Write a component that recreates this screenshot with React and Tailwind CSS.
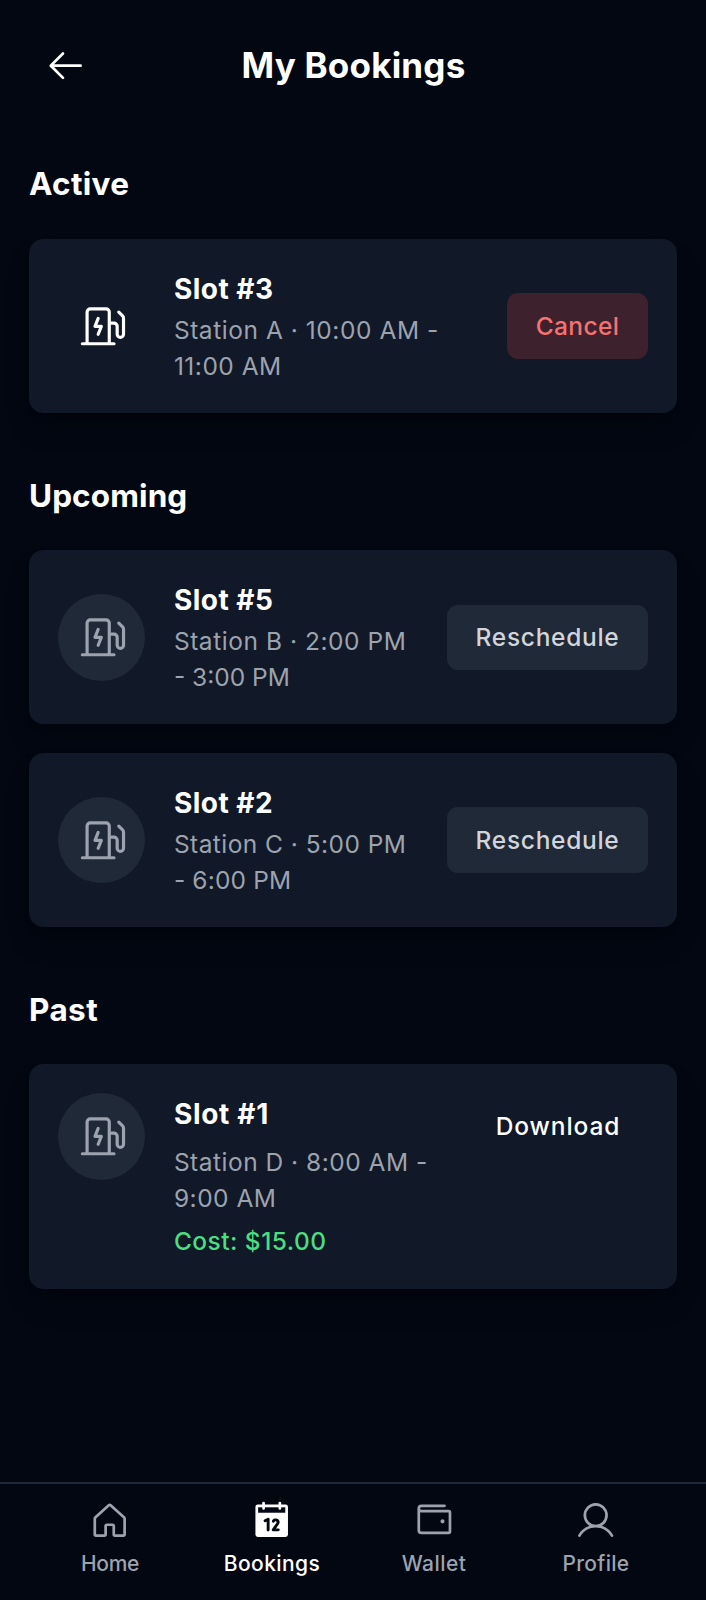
import { PiChargingStation, PiWallet, PiUser, PiArrowLeft } from 'react-icons/pi';

function HouseIcon() {
  return (
    <svg viewBox="0 0 256 256" className="size-[43.4px]" fill="none" stroke="currentColor" strokeWidth="16" strokeLinecap="round" strokeLinejoin="round">
      <path d="M152,208V160a8,8,0,0,0-8-8H112a8,8,0,0,0-8,8v48a8,8,0,0,1-8,8H48a8,8,0,0,1-8-8V115.5a8.3,8.3,0,0,1,2.6-5.9l80-72.7a8,8,0,0,1,10.8,0l80,72.7a8.3,8.3,0,0,1,2.6,5.9V208a8,8,0,0,1-8,8H160A8,8,0,0,1,152,208Z" />
    </svg>
  );
}

function CalendarIcon() {
  return (
    <svg viewBox="0 0 256 256" className="size-[43.4px]" fill="none" strokeLinecap="round" strokeLinejoin="round">
      <rect x="32" y="32" width="192" height="192" rx="14" fill="#ffffff" />
      <rect x="48" y="49" width="160" height="32" fill="#030712" />
      <path d="M80,24V56M176,24V56" stroke="#ffffff" strokeWidth="16" />
      <path d="M89,128l18-9v64M138,131a14,14,0,1,1,26,13L137,182h30" stroke="#030712" strokeWidth="17" />
    </svg>
  );
}

function Section({ title, spacing, children }) {
  return (
    <section>
      <h2 className={`mb-[29px] h-[50.7px] text-[31.5px] leading-[50.7px] font-bold ${spacing}`}>{title}</h2>
      <div className="flex flex-col gap-[29px]">{children}</div>
    </section>
  );
}

function Booking({ slot, slotSpacing, lines, cost, active, action, actionStyle }) {
  return (
    <article
      className={`flex gap-[29px] rounded-[14.5px] bg-[#111827] p-[29px] shadow-[0_18px_27px_-5px_rgba(0,0,0,0.25),0_7px_11px_-7px_rgba(0,0,0,0.25)] ${
        cost ? 'h-[224.2px] items-start' : 'h-[173.8px] items-center'
      }`}
    >
      <div
        className={`flex size-[86.9px] shrink-0 items-center justify-center rounded-full text-[50.7px] ${
          active ? 'text-white' : 'bg-[#1f2937] text-[#9ca3af]'
        }`}
      >
        <PiChargingStation />
      </div>
      <div className="min-w-0 flex-1 whitespace-nowrap">
        <h3 className={`h-[43.4px] text-[28px] leading-[43.4px] font-bold ${slotSpacing}`}>{slot}</h3>
        <p className={`text-[24.5px] leading-[36.2px] text-[#9ca3af] ${cost ? 'mt-[7.2px]' : ''}`}>
          {lines.map(([text, spacing]) => (
            <span key={text} className={`block ${spacing}`}>{text}</span>
          ))}
        </p>
        {cost && (
          <p className="mt-[7.2px] text-[24.5px] leading-[36.2px] font-medium tracking-[0.45px] text-[#4ade80]">{cost}</p>
        )}
      </div>
      <button className={`h-[65.2px] shrink-0 rounded-[10.9px] text-[24.5px] font-medium ${actionStyle}`}>{action}</button>
    </article>
  );
}

function NavItem({ icon, label, style }) {
  return (
    <a className={`flex flex-1 flex-col items-center gap-[6.4px] text-[21px] leading-[29px] font-medium ${style}`}>
      <span className="text-[43.4px]">{icon}</span>
      <span>{label}</span>
    </a>
  );
}

const reschedule = 'w-[201px] bg-[#1f2937] text-[#d1d5db] tracking-[0.7px]';

export default function App() {
  return (
    <div className="flex h-[1600px] w-[706px] flex-col overflow-hidden bg-[#030712] font-['Inter',sans-serif] text-white">
      <header className="flex h-[130.6px] shrink-0 items-center px-[29px]">
        <button className="flex size-[72.4px] items-center justify-center text-[43.4px]" aria-label="Back">
          <PiArrowLeft />
        </button>
        <h1 className="flex-1 pr-[71.4px] text-center text-[35px] font-bold tracking-[0.2px]">My Bookings</h1>
      </header>

      <main className="flex flex-1 flex-col gap-[57.7px] px-[29px] pt-[28.9px]">
        <Section title="Active" spacing="tracking-[0.3px]">
          <Booking
            active
            slot="Slot #3"
            slotSpacing="tracking-[0.5px]"
            lines={[['Station A · 10:00 AM -', 'tracking-[0.55px]'], ['11:00 AM', 'tracking-[0.5px]']]}
            action="Cancel"
            actionStyle="w-[141px] bg-[#ef4444]/20 text-[#f87171] tracking-[0.4px]"
          />
        </Section>
        <Section title="Upcoming" spacing="tracking-[0.1px]">
          <Booking
            slot="Slot #5"
            slotSpacing="tracking-[0.5px]"
            lines={[['Station B · 2:00 PM', 'tracking-[0.55px]'], ['- 3:00 PM', 'tracking-[0px]']]}
            action="Reschedule"
            actionStyle={reschedule}
          />
          <Booking
            slot="Slot #2"
            slotSpacing="tracking-[0.5px]"
            lines={[['Station C · 5:00 PM', 'tracking-[0.45px]'], ['- 6:00 PM', 'tracking-[0.15px]']]}
            action="Reschedule"
            actionStyle={reschedule}
          />
        </Section>
        <Section title="Past" spacing="tracking-[0.4px]">
          <Booking
            slot="Slot #1"
            slotSpacing="tracking-[0.7px]"
            lines={[['Station D · 8:00 AM -', 'tracking-[0.5px]'], ['9:00 AM', 'tracking-[0.5px]']]}
            cost="Cost: $15.00"
            action="Download"
            actionStyle="w-[180px] text-white tracking-[0.9px]"
          />
        </Section>
      </main>

      <nav className="flex h-[118px] shrink-0 border-t-2 border-[#1f2937] px-[29px] pt-[15px]">
        <NavItem icon={<HouseIcon />} label="Home" style="text-[#9ca3af] tracking-[-0.32px]" />
        <NavItem icon={<CalendarIcon />} label="Bookings" style="text-white tracking-[0.4px]" />
        <NavItem icon={<PiWallet />} label="Wallet" style="text-[#9ca3af] tracking-[0.44px]" />
        <NavItem icon={<PiUser />} label="Profile" style="text-[#9ca3af] tracking-[0.3px]" />
      </nav>
    </div>
  );
}
